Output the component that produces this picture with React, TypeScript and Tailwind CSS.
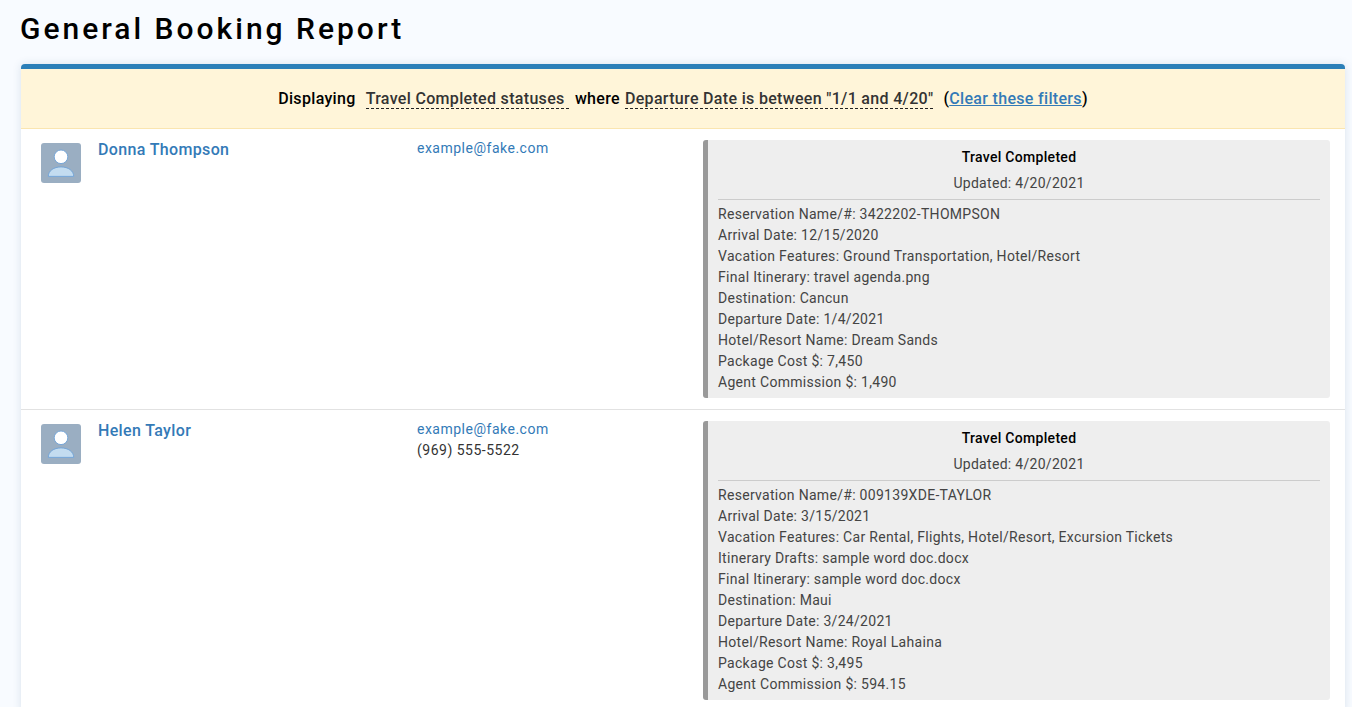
import React from "react";

interface IBooking {
  name: string;
  email: string;
  phone?: string;
  details: string[];
}

const bookings: IBooking[] = [
  {
    name: "Donna Thompson",
    email: "example@fake.com",
    details: [
      "Reservation Name/#: 3422202-THOMPSON",
      "Arrival Date: 12/15/2020",
      "Vacation Features: Ground Transportation, Hotel/Resort",
      "Final Itinerary: travel agenda.png",
      "Destination: Cancun",
      "Departure Date: 1/4/2021",
      "Hotel/Resort Name: Dream Sands",
      "Package Cost $: 7,450",
      "Agent Commission $: 1,490",
    ],
  },
  {
    name: "Helen Taylor",
    email: "example@fake.com",
    phone: "(969) 555-5522",
    details: [
      "Reservation Name/#: 009139XDE-TAYLOR",
      "Arrival Date: 3/15/2021",
      "Vacation Features: Car Rental, Flights, Hotel/Resort, Excursion Tickets",
      "Itinerary Drafts: sample word doc.docx",
      "Final Itinerary: sample word doc.docx",
      "Destination: Maui",
      "Departure Date: 3/24/2021",
      "Hotel/Resort Name: Royal Lahaina",
      "Package Cost $: 3,495",
      "Agent Commission $: 594.15",
    ],
  },
];

const Avatar = () => (
  <div className="h-10 w-10 shrink-0 rounded-[3px] bg-[#9aaec2]">
    <svg viewBox="0 0 40 40" className="h-10 w-10">
      <circle cx="20" cy="13.8" r="6.8" fill="#ffffff" stroke="#6fa3d8" strokeWidth="0.9" />
      <path
        d="M7.3 33.4c0-5.8 5.6-9.5 12.7-9.5s12.7 3.7 12.7 9.5z"
        fill="#c3dcf0"
        stroke="#6fa3d8"
        strokeWidth="0.9"
      />
    </svg>
  </div>
);

const BookingRow = ({ booking }: { booking: IBooking }) => (
  <div className="flex border-b border-[#e2e2e2] py-[11px] pr-[15px] pl-5">
    <div className="mt-[3px] shrink-0">
      <Avatar />
    </div>
    <div className="ml-[17px] w-[319px] shrink-0 text-base leading-[20px] font-medium tracking-[0.35px] text-[#337ab7]">
      {booking.name}
    </div>
    <div className="-mt-[2px] w-[286px] shrink-0 leading-[21px] tracking-[0.5px] text-[#333]">
      <div className="text-[#337ab7]">{booking.email}</div>
      {booking.phone && <div>{booking.phone}</div>}
    </div>
    <div className="flex-1 rounded-[3px] border-l-[5px] border-[#999] bg-[#eee] pr-2.5 pb-[5px] pl-2.5">
      <div className="pt-[7px] text-center leading-[21px] font-medium text-black">
        Travel Completed
      </div>
      <div className="border-b border-[#ccc] py-[5px] text-center leading-[21px] text-[#444]">
        Updated: 4/20/2021
      </div>
      <div className="pt-1 leading-[21px] text-[#444]">
        {booking.details.map((line) => (
          <div key={line}>{line}</div>
        ))}
      </div>
    </div>
  </div>
);

const App = () => {
  return (
    <div className="h-[707px] overflow-hidden bg-[#f8fbff] pr-[7px] pl-[21px] font-['Roboto',sans-serif] text-sm tracking-[0.3px]">
      <h1 className="-ml-px pt-[9px] pb-4 text-[30px] leading-[39px] font-medium tracking-[3px] text-black">
        General Booking Report
      </h1>
      <div className="overflow-hidden rounded-t-[4px] border-t-[5px] border-[#2b7fb8] bg-white shadow-[0_0_8px_rgba(40,80,130,0.15)]">
        <div className="h-[60px] border-b border-[#fae5b0] bg-[#fff5d9] pt-5 text-center text-base leading-[20px] font-medium tracking-[0.32px] text-black">
          <span>Displaying</span>
          <span className="ml-[10px] border-b border-dashed border-[#222] text-[#333]">
            Travel Completed statuses&nbsp;
          </span>
          <span className="ml-[6px]">where</span>
          <span className="ml-[5px] border-b border-dashed border-[#222] text-[#333]">
            Departure Date is between "1/1 and 4/20"
          </span>
          <span className="ml-[10px]">
            (<a className="text-[#337ab7] underline">Clear these filters</a>)
          </span>
        </div>
        {bookings.map((booking) => (
          <BookingRow key={booking.name} booking={booking} />
        ))}
      </div>
    </div>
  );
};

export default App;
